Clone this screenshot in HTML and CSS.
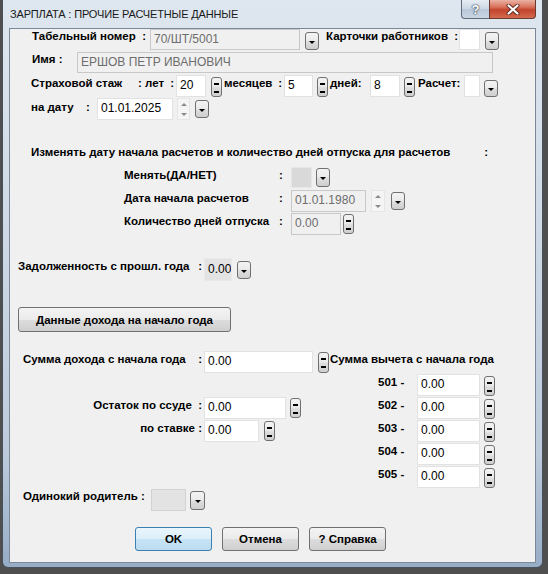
FILE: index.html
```html
<!DOCTYPE html>
<html lang="ru">
<head>
  <meta charset="UTF-8" />
  <title>Зарплата : прочие расчетные данные</title>
  <link rel="stylesheet" href="styles.css">
</head>
<body>
  <div class="window">
    <div class="titlebar">
      <span class="title">ЗАРПЛАТА : ПРОЧИЕ РАСЧЕТНЫЕ ДАННЫЕ</span>
      <div class="caption">
        <span class="cap-btn cap-help">?</span>
        <span class="cap-btn cap-close">
          <svg width="14" height="11" viewBox="0 0 14 11">
            <path d="M2.5 1.5 L11.5 9.5 M11.5 1.5 L2.5 9.5" stroke="#5a2a22" stroke-width="4" stroke-linecap="round"/>
            <path d="M2.5 1.5 L11.5 9.5 M11.5 1.5 L2.5 9.5" stroke="#fff" stroke-width="2.2" stroke-linecap="round"/>
          </svg>
        </span>
      </div>
    </div>

    <div class="client">
      <!-- работник -->
      <div class="row r1">
        <span class="lbl l-tab">Табельный номер&nbsp; :</span>
        <span class="fld dis f-tab">70/ШТ/5001</span>
        <span class="dd d-r1"></span>
        <span class="lbl l-cards">Карточки работников&nbsp; :</span>
        <span class="fld f-cards"></span>
        <span class="dd d-r1"></span>
      </div>

      <div class="row r2">
        <span class="lbl l-name">Имя :</span>
        <span class="fld dis f-name">ЕРШОВ ПЕТР ИВАНОВИЧ</span>
      </div>

      <div class="row r3">
        <span class="lbl l-stazh">Страховой стаж</span>
        <span class="lbl pair l-let"><span>: лет</span><span>:</span></span>
        <span class="fld f-let">20</span>
        <span class="eq e-r3 e-let"></span>
        <span class="lbl pair l-mes"><span>месяцев</span><span>:</span></span>
        <span class="fld f-mes">5</span>
        <span class="eq e-r3 e-mes"></span>
        <span class="lbl l-dn">дней:</span>
        <span class="fld f-dn">8</span>
        <span class="eq e-r3 e-dn"></span>
        <span class="lbl l-calc">Расчет:</span>
        <span class="fld f-calc"></span>
        <span class="dd d-calc"></span>
      </div>

      <div class="row r4">
        <span class="lbl l-date">на дату</span>
        <span class="lbl l-colon">:</span>
        <span class="fld f-date">01.01.2025</span>
        <span class="spin s-date"><i class="up"></i><i class="down"></i></span>
        <span class="dd d-date"></span>
      </div>

      <!-- даты расчетов -->
      <div class="hdr"><span>Изменять дату начала расчетов и количество дней отпуска для расчетов</span><span>:</span></div>

      <div class="row r-ch">
        <span class="lbl l-sub">Менять(ДА/НЕТ)</span>
        <span class="lbl l-subc">:</span>
        <span class="fld grey f-ch"></span>
        <span class="dd d-ch"></span>
      </div>
      <div class="row r-start">
        <span class="lbl l-sub">Дата начала расчетов</span>
        <span class="lbl l-subc">:</span>
        <span class="fld dis f-start">01.01.1980</span>
        <span class="spin s-start"><i class="up"></i><i class="down"></i></span>
        <span class="dd d-start"></span>
      </div>
      <div class="row r-days">
        <span class="lbl l-sub">Количество дней отпуска</span>
        <span class="lbl l-subc">:</span>
        <span class="fld dis f-days">0.00</span>
        <span class="eq e-days"></span>
      </div>

      <div class="row r-debt">
        <span class="lbl pair l-debt"><span>Задолженность с прошл. года</span><span>:</span></span>
        <span class="fld ro f-debt">0.00</span>
        <span class="dd d-debt"></span>
      </div>

      <button class="btn btn-income">Данные дохода на начало года</button>

      <!-- доходы и вычеты -->
      <div class="row r-sum">
        <span class="lbl pair l-sum"><span>Сумма дохода с начала года</span><span>:</span></span>
        <span class="fld f-sum">0.00</span>
        <span class="eq e-sum"></span>
        <span class="lbl l-ded">Сумма вычета с начала года</span>
      </div>

      <div class="cols">
        <div class="col-left">
          <div class="row r-loan">
            <span class="lbl l-right">Остаток по ссуде&nbsp; :</span>
            <span class="fld f-loan">0.00</span>
            <span class="eq e-loan"></span>
          </div>
          <div class="row r-rate">
            <span class="lbl l-right">по ставке :</span>
            <span class="fld f-rate">0.00</span>
            <span class="eq e-rate"></span>
          </div>
        </div>
        <div class="col-right">
          <div class="row"><span class="lbl l-code">501 -</span><span class="fld f-code">0.00</span><span class="eq e-code"></span></div>
          <div class="row"><span class="lbl l-code">502 -</span><span class="fld f-code">0.00</span><span class="eq e-code"></span></div>
          <div class="row"><span class="lbl l-code">503 -</span><span class="fld f-code">0.00</span><span class="eq e-code"></span></div>
          <div class="row"><span class="lbl l-code">504 -</span><span class="fld f-code">0.00</span><span class="eq e-code"></span></div>
          <div class="row"><span class="lbl l-code">505 -</span><span class="fld f-code">0.00</span><span class="eq e-code"></span></div>
        </div>
      </div>

      <div class="row r-single">
        <span class="lbl l-single">Одинокий родитель :</span>
        <span class="fld grey2 f-single"></span>
        <span class="dd d-single"></span>
      </div>

      <div class="actions">
        <button class="btn btn-ok">OK</button>
        <button class="btn">Отмена</button>
        <button class="btn">? Справка</button>
      </div>
    </div>
  </div>
</body>
</html>
```

FILE: styles.css
```css
* {
  box-sizing: border-box;
}

body {
  margin: 0;
  background: #4f4f4f;
  font-family: "Liberation Sans", Arial, sans-serif;
  font-size: 11px;
  color: #000;
}

/* window frame */
.window {
  width: 541px;
  height: 568px;
  margin-left: 2px;
  border: 1px solid #47505b;
  border-top: 0;
  border-radius: 0 0 6px 6px;
  background: linear-gradient(#dee6ef, #d3dde8 30%, #bccadb 80%, #97adc6);
  display: flex;
  flex-direction: column;
}

.titlebar {
  flex: none;
  height: 28px;
  display: flex;
  justify-content: space-between;
  align-items: flex-start;
  padding: 0 6px 0 7px;
}

.title {
  margin-top: 8px;
  font-size: 11px;
  line-height: 13px;
  letter-spacing: -0.15px;
  color: #1a1a1a;
}

.caption {
  display: flex;
}

.cap-btn {
  height: 19px;
  border: 1px solid #5d6b7c;
  border-top: 0;
  display: flex;
  align-items: center;
  justify-content: center;
}

.cap-help {
  width: 28px;
  border-right: 0;
  border-radius: 0 0 0 4px;
  background: linear-gradient(#e6ecf2, #cdd8e4 50%, #b9c7d7 51%, #cad6e3);
  color: #fff;
  font-weight: bold;
  font-size: 13px;
  text-shadow: 0 0 1px #3d4a5a, 0 0 1px #3d4a5a, 0 0 2px #3d4a5a;
}

.cap-close {
  width: 47px;
  border-color: #6a3930;
  border-radius: 0 0 4px 0;
  background: linear-gradient(#eab2a3, #d8705a 40%, #c3432b 55%, #d36b4f);
}

.client {
  flex: 1;
  margin: 0 6px 4px 6px;
  background: #f0f0f0;
  border: 1px solid #7b8897;
}

/* common controls */
.row {
  display: flex;
  align-items: flex-start;
}

.lbl {
  flex: none;
  font-weight: bold;
  font-size: 11.5px;
  line-height: 13px;
  padding-top: 2px;
  white-space: nowrap;
}

.pair {
  display: flex;
  justify-content: space-between;
  padding-right: 2px;
}

.fld {
  flex: none;
  height: 22px;
  line-height: 18px;
  padding-left: 3px;
  font-size: 12px;
  background: #fff;
  border: 1px solid #e2e2e2;
  white-space: nowrap;
  overflow: hidden;
}

.dis {
  background: #f0f0f0;
  border-color: #c8c8c8;
  color: #6d6d6d;
}

.grey {
  background: #d9d9d9;
  border-color: #e6e6e6;
}

.grey2 {
  background: #e3e3e3;
  border-color: #d2d2d2;
}

.ro {
  background: #e3e3e3;
  border-color: #e9e9e9;
}

.dd,
.eq {
  flex: none;
  border: 1px solid #707070;
  border-radius: 3px;
  background: linear-gradient(#f3f3f3, #ebebeb 45%, #dddddd 55%, #cfcfcf);
  display: flex;
  align-items: center;
  justify-content: center;
}

.dd {
  width: 14px;
  height: 18px;
}

.dd::after {
  content: "";
  margin-top: 2px;
  border-left: 3px solid transparent;
  border-right: 3px solid transparent;
  border-top: 3px solid #000;
}

.eq {
  width: 11px;
  height: 20px;
  margin-top: 1px;
}

.eq::after {
  content: "";
  width: 5px;
  height: 6px;
  margin-top: 1px;
  border-top: 2px solid #000;
  border-bottom: 2px solid #000;
}

.spin {
  flex: none;
  width: 13px;
  height: 22px;
  border: 1px solid #e6e6e6;
  background: #f5f5f5;
  display: flex;
  flex-direction: column;
  align-items: center;
  justify-content: space-around;
}

.spin i {
  display: block;
  width: 0;
  height: 0;
  border-left: 3px solid transparent;
  border-right: 3px solid transparent;
}

.spin .up {
  border-bottom: 3px solid #8a8a8a;
}

.spin .down {
  border-top: 3px solid #8a8a8a;
}

.btn {
  display: block;
  padding: 0;
  font: bold 11.5px "Liberation Sans", Arial, sans-serif;
  color: #000;
  border: 1px solid #707070;
  border-radius: 3px;
  background: linear-gradient(#f3f3f3, #ebebeb 50%, #dddddd 50%, #cfcfcf);
}

.btn-ok {
  border-color: #3c7fb1;
  background: linear-gradient(#eaf5fc, #dbeefa 50%, #c7e4f6 50%, #bcdcf1);
}

/* employee block */
.l-tab { margin-left: 22px; width: 118px; padding-top: 1px; }
.f-tab { width: 150px; height: 21px; line-height: 19px; }
.d-r1 { margin-left: 5px; margin-top: 3px; }
.l-cards { margin-left: 7px; width: 133px; padding-top: 1px; }
.f-cards { width: 21px; height: 21px; }

.r2 { margin-top: 2px; }
.l-name { margin-left: 22px; width: 45px; padding-top: 1px; }
.f-name { width: 416px; height: 21px; line-height: 19px; }

.r3 { margin-top: 2px; }
.l-stazh { margin-left: 21px; width: 107px; }
.l-let { width: 38px; }
.f-let { width: 30px; }
.e-r3 { margin-top: 2px; }
.e-let { margin-left: 5px; }
.l-mes { margin-left: 2px; width: 60px; }
.f-mes { width: 29px; }
.e-mes { margin-left: 4px; }
.l-dn { margin-left: 2px; width: 40px; }
.f-dn { width: 30px; }
.e-dn { margin-left: 4px; }
.l-calc { margin-left: 3px; width: 46px; }
.f-calc { width: 16px; }
.d-calc { margin-left: 4px; margin-top: 5px; height: 17px; }

.r4 { margin-top: 1px; }
.l-date { margin-left: 21px; width: 55px; padding-top: 3px; }
.l-colon { width: 11px; padding-top: 3px; }
.f-date { width: 76px; }
.s-date { margin-left: 4px; }
.d-date { margin-left: 5px; margin-top: 2px; }

/* calc dates block */
.hdr {
  margin: 26px 0 0 21px;
  width: 457px;
  display: flex;
  justify-content: space-between;
  font-weight: bold;
  font-size: 11.5px;
  line-height: 13px;
}

.r-ch { margin-top: 8px; }
.l-sub { margin-left: 114px; width: 155px; }
.l-subc { width: 12px; }
.f-ch { width: 21px; height: 21px; }
.d-ch { margin-left: 4px; margin-top: 1px; height: 19px; }

.r-start { margin-top: 2px; }
.f-start { width: 75px; }
.s-start { margin-left: 5px; width: 14px; }
.d-start { margin-left: 6px; margin-top: 2px; }

.r-days { margin-top: 1px; }
.f-days { width: 50px; }
.e-days { margin-left: 2px; }

.r-debt { margin-top: 23px; }
.l-debt { margin-left: 8px; width: 186px; }
.f-debt { width: 28px; height: 23px; line-height: 20px; }
.d-debt { margin-left: 5px; margin-top: 3px; }

.btn-income {
  margin: 26px 0 0 8px;
  width: 213px;
  height: 25px;
}

/* income block */
.r-sum { margin-top: 19px; }
.l-sum { margin-left: 13px; width: 181px; }
.f-sum { width: 109px; }
.e-sum { margin-left: 5px; height: 21px; }
.l-ded { margin-left: 1px; }

.cols {
  display: flex;
  margin-top: 1px;
}

.col-left {
  width: 368px;
  padding-top: 23px;
}

.col-right {
  display: flex;
  flex-direction: column;
  gap: 1px;
}

.l-right { width: 194px; text-align: right; padding-right: 2px; }
.f-loan { width: 82px; }
.e-loan { margin-left: 4px; }
.r-rate { margin-top: 1px; }
.f-rate { width: 55px; }
.e-rate { margin-left: 5px; }

.l-code { width: 39px; }
.f-code { width: 63px; }
.e-code { margin-left: 4px; margin-top: 2px; }

.r-single { margin-top: 1px; }
.l-single { margin-left: 13px; width: 128px; padding-top: 1px; }
.f-single { width: 35px; }
.d-single { margin-left: 4px; margin-top: 2px; width: 15px; height: 19px; }

.actions {
  display: flex;
  gap: 10px;
  margin: 16px 0 0 125px;
}

.actions .btn {
  width: 77px;
  height: 24px;
}
```
